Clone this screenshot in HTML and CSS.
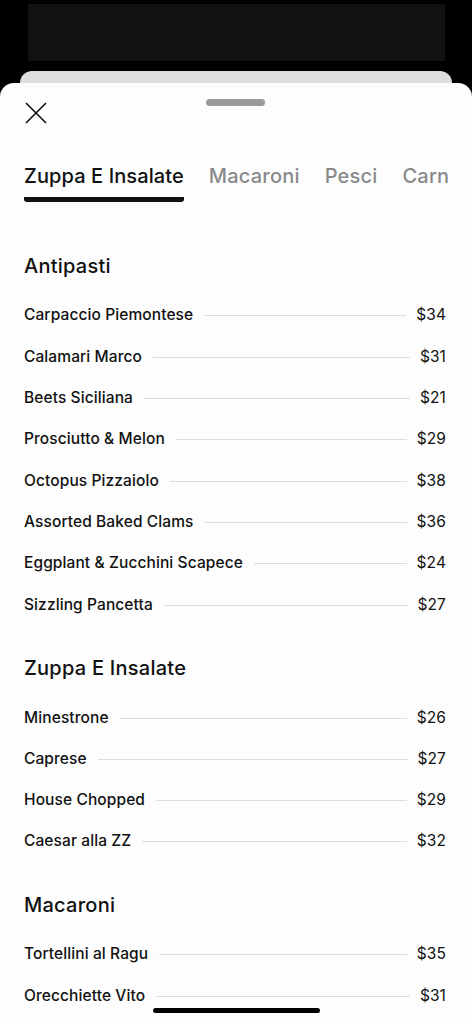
FILE: index.html
```html
<!DOCTYPE html>
<html lang="en">
<head>
  <meta charset="UTF-8">
  <meta name="viewport" content="width=device-width, initial-scale=1.0">
  <title>Menu</title>
  <link rel="stylesheet" href="styles.css">
</head>
<body>
  <div class="screen-top"></div>
  <div class="back-card"></div>

  <div class="sheet">
    <div class="handle"></div>

    <button class="close" aria-label="Close">
      <svg width="22" height="22" viewBox="0 0 22 22">
        <path d="M1 1 L21 21 M21 1 L1 21" stroke="#111" stroke-width="1.6" fill="none"/>
      </svg>
    </button>

    <div class="tabs">
      <div class="tab active">Zuppa E Insalate</div>
      <div class="tab">Macaroni</div>
      <div class="tab">Pesci</div>
      <div class="tab">Carne</div>
    </div>

    <div class="section first">
      <h2>Antipasti</h2>
      <div class="item"><span class="name">Carpaccio Piemontese</span><span class="dots"></span><span class="price">$34</span></div>
      <div class="item"><span class="name">Calamari Marco</span><span class="dots"></span><span class="price">$31</span></div>
      <div class="item"><span class="name">Beets Siciliana</span><span class="dots"></span><span class="price">$21</span></div>
      <div class="item"><span class="name">Prosciutto &amp; Melon</span><span class="dots"></span><span class="price">$29</span></div>
      <div class="item"><span class="name">Octopus Pizzaiolo</span><span class="dots"></span><span class="price">$38</span></div>
      <div class="item"><span class="name">Assorted Baked Clams</span><span class="dots"></span><span class="price">$36</span></div>
      <div class="item"><span class="name">Eggplant &amp; Zucchini Scapece</span><span class="dots"></span><span class="price">$24</span></div>
      <div class="item"><span class="name">Sizzling Pancetta</span><span class="dots"></span><span class="price">$27</span></div>
    </div>

    <div class="section">
      <h2>Zuppa E Insalate</h2>
      <div class="item"><span class="name">Minestrone</span><span class="dots"></span><span class="price">$26</span></div>
      <div class="item"><span class="name">Caprese</span><span class="dots"></span><span class="price">$27</span></div>
      <div class="item"><span class="name">House Chopped</span><span class="dots"></span><span class="price">$29</span></div>
      <div class="item"><span class="name">Caesar alla ZZ</span><span class="dots"></span><span class="price">$32</span></div>
    </div>

    <div class="section">
      <h2>Macaroni</h2>
      <div class="item"><span class="name">Tortellini al Ragu</span><span class="dots"></span><span class="price">$35</span></div>
      <div class="item"><span class="name">Orecchiette Vito</span><span class="dots"></span><span class="price">$31</span></div>
    </div>
  </div>

  <div class="home-bar"></div>
</body>
</html>
```

FILE: styles.css
```css
html, body {
  height: 1024px;
  overflow: hidden;
}

body {
  margin: 0;
  background-color: #000;
  font-family: Inter, "Noto Sans", sans-serif;
  color: #111;
}

.screen-top {
  margin: 4px 27px 0 28px;
  height: 57px;
  background-color: #111;
}

.back-card {
  margin: 10px 20px 0;
  height: 30px;
  background-color: #dedede;
  border-radius: 12px 12px 0 0;
}

.sheet {
  position: relative;
  margin-top: -18px;
  height: 960px;
  background-color: #fdfdfd;
  border-radius: 14px 14px 0 0;
  padding: 19px 0 0 24px;
}

.handle {
  position: absolute;
  top: 16px;
  left: 206px;
  width: 59px;
  height: 7px;
  border-radius: 4px;
  background-color: #9a9a9a;
}

.close {
  display: block;
  margin: 0 0 0 1px;
  padding: 0;
  border: none;
  background: none;
  width: 22px;
  height: 22px;
}

.close svg {
  display: block;
}

/* category tabs */
.tabs {
  display: flex;
  gap: 25px;
  margin-top: 38px;
  margin-right: 23px;
  overflow: hidden;
  white-space: nowrap;
}

.tab {
  font-size: 20px;
  line-height: 28px;
  font-weight: 500;
  letter-spacing: 0.2px;
  color: #8a8a8a;
  padding-bottom: 12px;
}

.tab.active {
  color: #111;
  letter-spacing: 0.1px;
  border-bottom: 5px solid #111;
  border-radius: 3px;
  padding-bottom: 7px;
}

/* menu sections */
.section {
  margin-right: 26px;
  padding-top: 29.35px;
}

.section.first {
  padding-top: 50px;
}

h2 {
  margin: 0 0 14.35px;
  font-size: 20px;
  line-height: 28px;
  font-weight: 500;
  letter-spacing: 0.25px;
}

.item {
  display: flex;
  align-items: center;
  height: 41.3px;
  font-size: 15.5px;
  font-weight: 500;
  letter-spacing: 0.1px;
}

.price {
  font-weight: 400;
}

.dots {
  flex: 1;
  height: 1px;
  margin: 2px 10px 0 11px;
  background-color: #dcdcdc;
}

.home-bar {
  position: absolute;
  left: 153px;
  top: 1008px;
  width: 167px;
  height: 5px;
  border-radius: 3px;
  background-color: #000;
}
```
